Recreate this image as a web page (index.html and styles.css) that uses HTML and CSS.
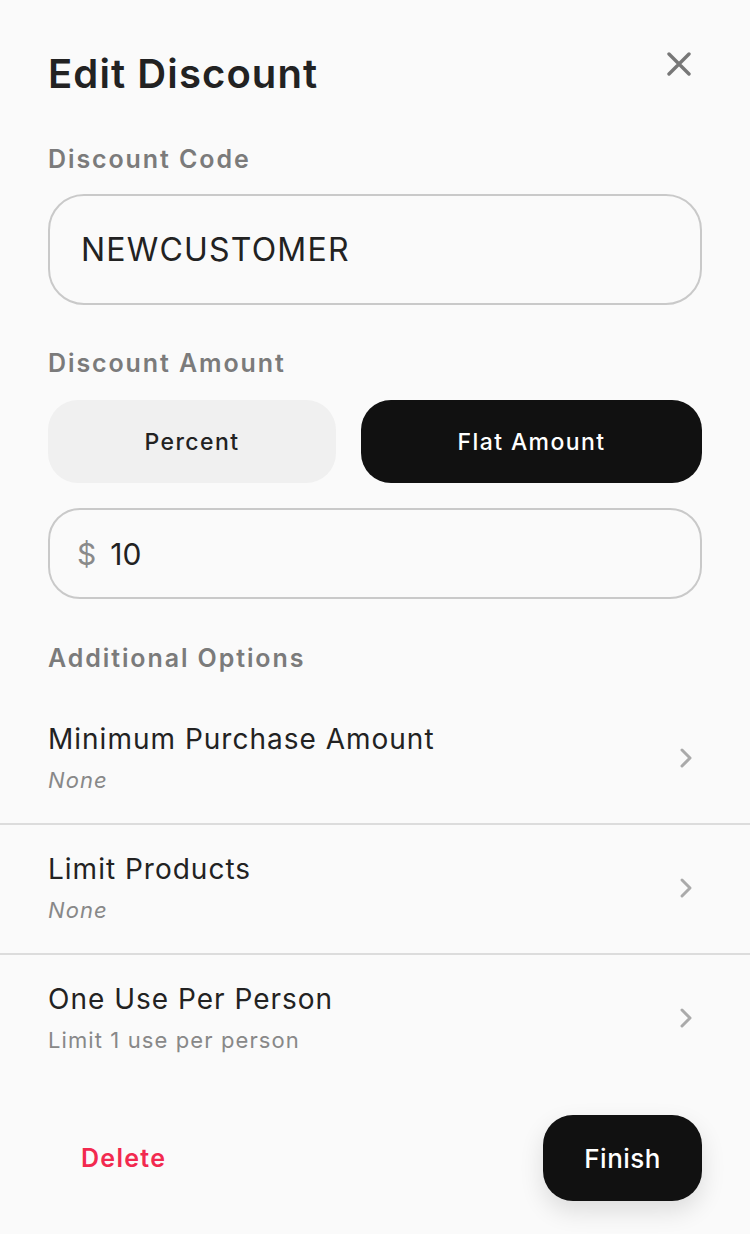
FILE: index.html
```html
<!DOCTYPE html>
<html lang="en">
<head>
<meta charset="utf-8">
<title>Edit Discount</title>
<link rel="stylesheet" href="styles.css">
</head>
<body>
<div class="sheet">
  <header class="header">
    <h1 class="title">Edit Discount</h1>
    <button class="close" aria-label="Close">
      <svg width="24" height="24" viewBox="0 0 24 24"><path d="M2 2 L22 22 M22 2 L2 22" stroke="#777" stroke-width="3.4" stroke-linecap="round" fill="none"/></svg>
    </button>
  </header>

  <div class="label label-code">Discount Code</div>
  <div class="field field-code"><span class="value">NEWCUSTOMER</span></div>

  <div class="label label-amount">Discount Amount</div>
  <div class="toggle">
    <button class="seg">Percent</button>
    <button class="seg seg-active">Flat Amount</button>
  </div>
  <div class="field field-amount"><span class="prefix">$</span><span class="value">10</span></div>

  <div class="label label-options">Additional Options</div>
</div>

<ul class="options">
  <li class="option">
    <div class="option-text">
      <div class="option-title">Minimum Purchase Amount</div>
      <div class="option-sub option-none">None</div>
    </div>
    <svg class="chev" width="14" height="22" viewBox="0 0 14 22"><path d="M3 3 L11 11 L3 19" stroke="#aaa" stroke-width="3" stroke-linecap="round" stroke-linejoin="round" fill="none"/></svg>
  </li>
  <li class="option">
    <div class="option-text">
      <div class="option-title">Limit Products</div>
      <div class="option-sub option-none">None</div>
    </div>
    <svg class="chev" width="14" height="22" viewBox="0 0 14 22"><path d="M3 3 L11 11 L3 19" stroke="#aaa" stroke-width="3" stroke-linecap="round" stroke-linejoin="round" fill="none"/></svg>
  </li>
  <li class="option">
    <div class="option-text">
      <div class="option-title">One Use Per Person</div>
      <div class="option-sub">Limit 1 use per person</div>
    </div>
    <svg class="chev" width="14" height="22" viewBox="0 0 14 22"><path d="M3 3 L11 11 L3 19" stroke="#aaa" stroke-width="3" stroke-linecap="round" stroke-linejoin="round" fill="none"/></svg>
  </li>
</ul>

<footer class="footer">
  <button class="delete">Delete</button>
  <button class="finish">Finish</button>
</footer>
</body>
</html>
```

FILE: styles.css
```css
* { box-sizing: border-box; }
html, body {
  margin: 0;
  padding: 0;
  background: #fafafa;
}
body {
  font-family: Inter, "Open Sans", sans-serif;
  color: #222;
  width: 750px;
  min-height: 1234px;
}
button {
  font-family: inherit;
  border: none;
  background: none;
  padding: 0;
  cursor: pointer;
}
.sheet {
  padding: 50px 48px 0 48px;
}
.header {
  display: flex;
  justify-content: space-between;
  align-items: flex-start;
}
.title {
  margin: 0;
  font-size: 40px;
  line-height: 48px;
  font-weight: 600;
  letter-spacing: 1.1px;
  color: #222;
}
.close {
  width: 24px;
  height: 24px;
  margin-top: 2px;
  margin-right: 11px;
  display: flex;
}
.label {
  font-size: 25px;
  line-height: 30px;
  font-weight: 600;
  letter-spacing: 1.9px;
  color: #7b7b7b;
}
.label-code { margin-top: 46px; }
.label-amount { margin-top: 43px; }
.label-options { margin-top: 44px; }
.field {
  margin-top: 20px;
  border: 2px solid #c9c9c9;
  border-radius: 36px;
  display: flex;
  align-items: center;
  padding: 0 31px;
}
.field-code { height: 111px; }
.field-code .value {
  font-size: 32px;
  letter-spacing: 1.2px;
  color: #222;
}
.field-amount {
  height: 91px;
  margin-top: 25px;
  padding-left: 27px;
  border-radius: 32px;
}
.prefix {
  font-size: 30px;
  color: #8a8a8a;
  margin-right: 14px;
}
.field-amount .value {
  font-size: 30px;
  color: #222;
}
.toggle {
  margin-top: 22px;
  display: flex;
  gap: 25px;
}
.seg {
  flex: 1 1 auto;
  height: 83px;
  border-radius: 30px;
  background: #f0f0f0;
  color: #222;
  font-size: 23px;
  font-weight: 500;
  letter-spacing: 1.4px;
}
.seg-active {
  background: #111;
  color: #fff;
}
.options {
  list-style: none;
  margin: 22px 0 0 0;
  padding: 0;
}
.option {
  display: flex;
  align-items: center;
  justify-content: space-between;
  padding: 27px 57px 29px 48px;
  border-bottom: 2px solid #dcdcdc;
}
.option:last-child { border-bottom: none; }
.option-title {
  font-size: 28px;
  line-height: 34px;
  letter-spacing: 1px;
  color: #222;
}
.option-sub {
  margin-top: 10px;
  font-size: 22px;
  line-height: 28px;
  letter-spacing: 1.1px;
  color: #888;
}
.option-none { font-style: italic; }
.chev { display: block; }
.footer {
  margin-top: 32px;
  padding: 0 48px 0 81px;
  display: flex;
  justify-content: space-between;
  align-items: center;
}
.delete {
  color: #f2294f;
  font-size: 25px;
  font-weight: 600;
  letter-spacing: 1.3px;
}
.finish {
  height: 86px;
  padding: 0 41px;
  border-radius: 30px;
  background: #111;
  color: #fff;
  font-size: 26px;
  font-weight: 500;
  letter-spacing: 0.5px;
  box-shadow: 0 10px 24px rgba(0,0,0,0.12);
}
```
